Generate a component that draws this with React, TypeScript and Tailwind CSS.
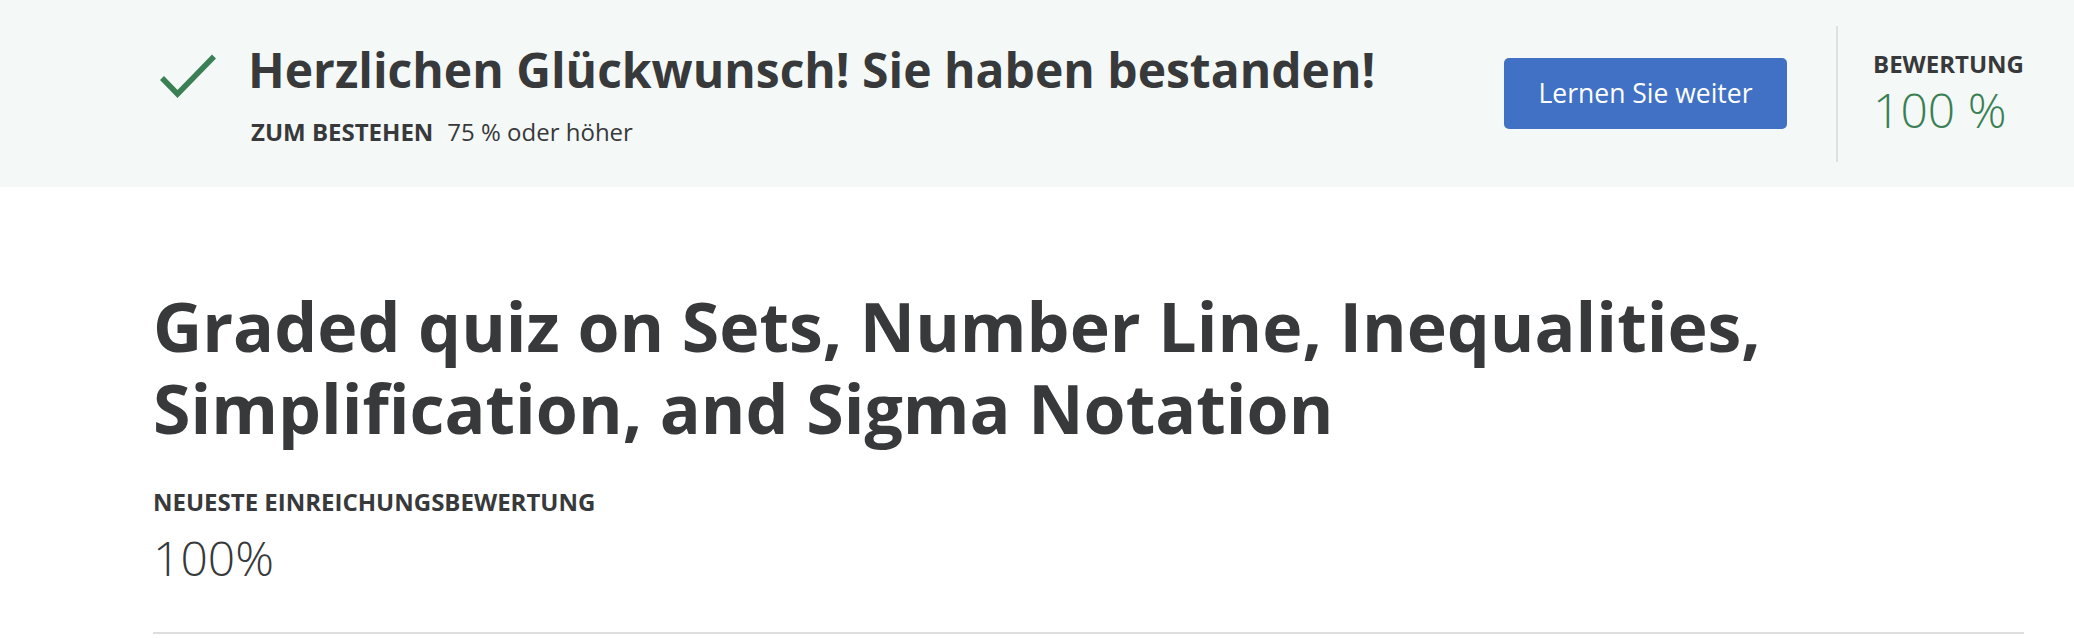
import React from "react";

export default function App() {
  return (
    <div className="min-h-screen bg-white font-['Open_Sans',sans-serif] text-[#37393b]">
      <header className="flex h-[187px] items-center bg-[#f4f8f7] pl-[152px] pr-[50px]">
        <div className="flex flex-1 items-start">
          <svg
            width="58"
            height="46"
            viewBox="0 0 58 46"
            className="mt-[11px] ml-[7px] shrink-0"
            fill="none"
          >
            <polyline
              points="3,25 18.5,41 55,3.5"
              stroke="#3b7f55"
              strokeWidth="5.5"
              strokeLinecap="butt"
              strokeLinejoin="miter"
            />
          </svg>
          <div className="ml-[31px]">
            <h2 className="text-[48px] font-bold leading-[56px]">
              Herzlichen Glückwunsch! Sie haben bestanden!
            </h2>
            <p className="mt-[20px] ml-[3px] text-[24px] leading-[28px]">
              <span className="font-bold">ZUM BESTEHEN</span>
              <span className="ml-[14px] font-normal">75 % oder höher</span>
            </p>
          </div>
        </div>
        <button className="flex h-[71px] w-[283px] items-center justify-center rounded-[5px] bg-[#4071c4] text-[26.5px] text-white">
          Lernen Sie weiter
        </button>
        <div className="ml-[49px] h-[136px] w-[2px] bg-[#e0e2e2]" />
        <div className="ml-[35px] w-[151px]">
          <div className="text-[24px] font-bold leading-[28px]">BEWERTUNG</div>
          <div className="mt-[4px] text-[48px] font-light leading-[56px] text-[#3b7f55]">
            100 %
          </div>
        </div>
      </header>
      <main className="pl-[153px] pr-[50px]">
        <h1 className="mt-[98px] text-[68px] font-bold leading-[82px]">
          Graded quiz on Sets, Number Line, Inequalities,
          <br />
          Simplification, and Sigma Notation
        </h1>
        <div className="mt-[39px] text-[24px] font-bold leading-[28px]">
          NEUESTE EINREICHUNGSBEWERTUNG
        </div>
        <div className="mt-[14px] text-[48px] font-light leading-[56px]">100%</div>
        <div className="mt-[46px] h-[2px] bg-[#dedede]" />
      </main>
    </div>
  );
}
